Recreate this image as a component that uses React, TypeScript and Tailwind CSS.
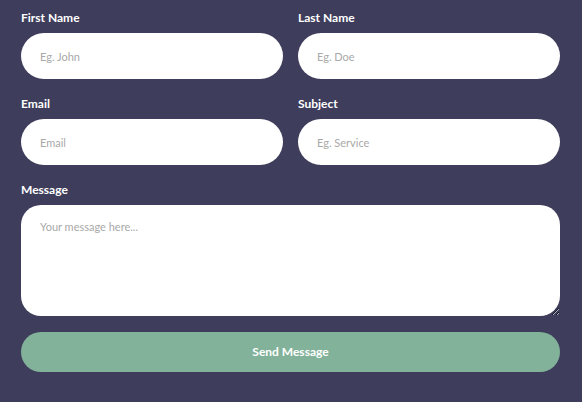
export default function App() {
  const label = "block h-[17px] leading-[17px] text-[12px] font-bold text-white mb-[7px]";
  const input =
    "w-full h-[46px] rounded-full bg-white px-[19px] text-[11px] text-gray-700 placeholder:text-[#a9a9a9] outline-none";
  return (
    <div
      className="w-[582px] h-[402px] bg-[#3e3d5b] pt-[9px] pl-[21px] pr-[22px]"
      style={{ fontFamily: "Lato, 'Noto Sans', sans-serif" }}
    >
      <div className="grid grid-cols-2 gap-x-[15px] gap-y-4">
        <div>
          <label className={label}>First Name</label>
          <input className={input} placeholder="Eg. John" />
        </div>
        <div>
          <label className={label}>Last Name</label>
          <input className={input} placeholder="Eg. Doe" />
        </div>
        <div>
          <label className={label}>Email</label>
          <input className={input} placeholder="Email" />
        </div>
        <div>
          <label className={label}>Subject</label>
          <input className={input} placeholder="Eg. Service" />
        </div>
        <div className="col-span-2">
          <label className={label}>Message</label>
          <textarea
            className="block w-full h-[111px] rounded-[20px] bg-white px-[19px] pt-[14px] text-[11px] text-gray-700 placeholder:text-[#a9a9a9] outline-none"
            placeholder="Your message here..."
          />
        </div>
        <div className="col-span-2">
          <button className="w-full h-[40px] rounded-full bg-[#82b29a] text-white text-[12px] font-bold">
            Send Message
          </button>
        </div>
      </div>
    </div>
  );
}
